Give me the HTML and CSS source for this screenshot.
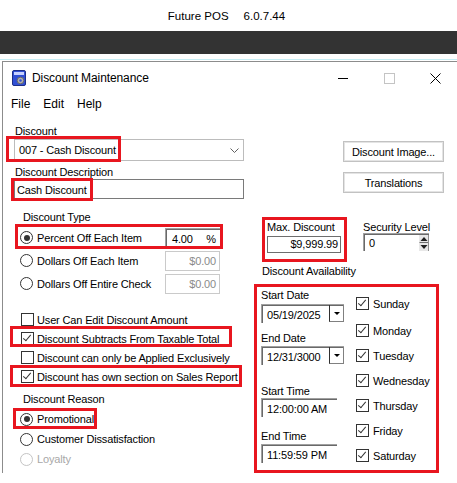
FILE: index.html
```html
<!DOCTYPE html>
<html lang="en">
  <head>
    <meta charset="UTF-8" />
    <meta name="viewport" content="width=device-width, initial-scale=1.0" />
    <title>Discount Maintenance</title>
    <link rel="stylesheet" href="styles.css">
  </head>
  <body>
    <div class="appHeader"><span>Future POS</span><span>6.0.7.44</span></div>
    <div class="appBar"></div>
    <div class="accent"></div>

    <div class="window">
      <div class="titleBar">
        <svg class="appIcon" viewBox="0 0 14 16">
          <rect x="0.5" y="0.5" width="13" height="15" rx="1.5" fill="#3150d4" stroke="#1d2e86" />
          <rect x="2" y="2" width="10" height="3" fill="#c8d2ff" />
          <circle cx="8.5" cy="10.5" r="3.3" fill="#b0b0b0" stroke="#6a6a6a" />
          <circle cx="8.5" cy="10.5" r="1.2" fill="#3150d4" />
        </svg>
        <span class="caption">Discount Maintenance</span>
        <div class="captionButtons">
          <span class="capBtn">
            <svg width="10" height="10" viewBox="0 0 10 10"><path d="M0 5.5h10" stroke="#000" /></svg>
          </span>
          <span class="capBtn">
            <svg width="11" height="11" viewBox="0 0 11 11"><rect x="0.5" y="0.5" width="10" height="10" fill="none" stroke="#c4c4c4" /></svg>
          </span>
          <span class="capBtn">
            <svg width="11" height="11" viewBox="0 0 11 11"><path d="M0.5 0.5l10 10M10.5 0.5l-10 10" stroke="#000" /></svg>
          </span>
        </div>
      </div>

      <div class="menuBar"><span>File</span><span>Edit</span><span>Help</span></div>

      <div class="form">
        <div class="leftCol">
          <div class="label discountLabel">Discount</div>
          <div class="combo">
            <span>007 - Cash Discount</span>
            <svg class="chevron" width="9" height="5" viewBox="0 0 9 5"><path d="M0.5 0.5l4 4 4-4" fill="none" stroke="#606060" /></svg>
            <div class="mark markCombo"></div>
          </div>
          <div class="label descLabel">Discount Description</div>
          <div class="textBox">Cash Discount<div class="mark markDesc"></div></div>

          <div class="label groupLabel">Discount Type</div>
          <div class="typeList">
            <div class="typeRow">
              <span class="radio on"></span><span class="optText">Percent Off Each Item</span>
              <span class="amount active"><span>4.00</span><span>%</span></span>
              <div class="mark markPercent"></div>
            </div>
            <div class="typeRow">
              <span class="radio"></span><span class="optText">Dollars Off Each Item</span>
              <span class="amount">$0.00</span>
            </div>
            <div class="typeRow">
              <span class="radio"></span><span class="optText">Dollars Off Entire Check</span>
              <span class="amount">$0.00</span>
            </div>
          </div>

          <div class="checkList">
            <div class="checkRow"><span class="check"></span><span class="optText">User Can Edit Discount Amount</span></div>
            <div class="checkRow"><span class="check on"></span><span class="optText">Discount Subtracts From Taxable Total</span><div class="mark markTaxable"></div></div>
            <div class="checkRow"><span class="check"></span><span class="optText">Discount can only be Applied Exclusively</span></div>
            <div class="checkRow"><span class="check on"></span><span class="optText">Discount has own section on Sales Report</span><div class="mark markReport"></div></div>
          </div>

          <div class="label groupLabel reasonLabel">Discount Reason</div>
          <div class="reasonList">
            <div class="reasonRow"><span class="radio on"></span><span class="optText">Promotional</span><div class="mark markPromo"></div></div>
            <div class="reasonRow"><span class="radio"></span><span class="optText">Customer Dissatisfaction</span></div>
            <div class="reasonRow disabled"><span class="radio"></span><span class="optText">Loyalty</span></div>
          </div>
        </div>

        <div class="rightCol">
          <div class="btn firstBtn">Discount Image...</div>
          <div class="btn">Translations</div>

          <div class="limits">
            <div class="maxDisc">
              <div class="label">Max. Discount</div>
              <div class="moneyBox">$9,999.99</div>
              <div class="mark markMax"></div>
            </div>
            <div class="security">
              <div class="label secLabel">Security Level</div>
              <div class="spin">
                <span>0</span>
                <svg class="spinArrows" width="10" height="16" viewBox="0 0 10 16">
                  <rect x="0" y="0" width="10" height="16" fill="#e8e8e8" />
                  <path d="M0.5 7.5h9" stroke="#707070" />
                  <path d="M5 2l3.5 4h-7z" fill="#202020" />
                  <path d="M5 14l3.5-4h-7z" fill="#202020" />
                  <path d="M9.5 0v16" stroke="#909090" />
                </svg>
              </div>
            </div>
          </div>

          <div class="label availLabel">Discount Availability</div>
          <div class="avail">
            <div class="dates">
              <div class="label startDate">Start Date</div>
              <div class="dateBox"><span>05/19/2025</span><span class="dropBtn"></span></div>
              <div class="label endDate">End Date</div>
              <div class="dateBox endBox"><span>12/31/3000</span><span class="dropBtn"></span></div>
              <div class="label startTime">Start Time</div>
              <div class="timeBox">12:00:00 AM</div>
              <div class="label endTime">End Time</div>
              <div class="timeBox endBox">11:59:59 PM</div>
            </div>
            <div class="days">
              <div class="dayRow"><span class="check on"></span><span class="optText">Sunday</span></div>
              <div class="dayRow"><span class="check on"></span><span class="optText">Monday</span></div>
              <div class="dayRow"><span class="check on"></span><span class="optText">Tuesday</span></div>
              <div class="dayRow"><span class="check on"></span><span class="optText">Wednesday</span></div>
              <div class="dayRow"><span class="check on"></span><span class="optText">Thursday</span></div>
              <div class="dayRow"><span class="check on"></span><span class="optText">Friday</span></div>
              <div class="dayRow"><span class="check on"></span><span class="optText">Saturday</span></div>
            </div>
          </div>
        </div>
      </div>
    </div>
  </body>
</html>
```

FILE: styles.css
```css
body {
  margin: 0;
  width: 457px;
  height: 483px;
  overflow: hidden;
  background-color: white;
  color: black;
  font-family: "Liberation Sans", Arial, sans-serif;
  font-size: 11px;
}

.appHeader {
  height: 31px;
  display: flex;
  justify-content: center;
  align-items: center;
  gap: 15px;
  padding-right: 4px;
  font-size: 11.5px;
}
.appBar {
  height: 23px;
  background-color: #333333;
}
.accent {
  height: 1px;
  margin-top: 5px;
  background-color: #c6edf4;
}

.window {
  margin: 1px 0 0 2px;
  width: 455px;
  border-left: 1px solid #8c8c8c;
  border-top: 1px solid #8c8c8c;
}
.titleBar {
  height: 32px;
  display: flex;
  align-items: center;
  font-size: 12px;
}
.appIcon {
  width: 14px;
  height: 16px;
  margin-left: 9px;
  flex: none;
}
.caption {
  margin-left: 6px;
  letter-spacing: -0.1px;
}
.captionButtons {
  margin-left: auto;
  display: flex;
  height: 100%;
}
.capBtn {
  width: 46px;
  display: flex;
  align-items: center;
  justify-content: center;
}

.menuBar {
  height: 20px;
  display: flex;
  align-items: center;
  gap: 13px;
  padding-left: 8px;
  font-size: 12px;
}

.form {
  display: flex;
  letter-spacing: -0.15px;
}
.leftCol,
.rightCol {
  display: flex;
  flex-direction: column;
  align-items: flex-start;
}
.leftCol {
  width: 250px;
  flex: none;
}
.rightCol {
  flex: 1;
}

.label {
  height: 13px;
  line-height: 13px;
  white-space: nowrap;
}
.mark {
  position: absolute;
  box-sizing: border-box;
  border: 3px solid #e8161f;
  pointer-events: none;
}

/* left column */
.discountLabel {
  margin: 11px 0 0 12px;
}
.combo {
  position: relative;
  box-sizing: border-box;
  margin: 1px 0 0 11px;
  width: 230px;
  height: 22px;
  border: 1px solid #bcbcbc;
  display: flex;
  align-items: center;
  padding-left: 4px;
}
.chevron {
  margin: 0 4px 0 auto;
}
.markCombo {
  left: -9px;
  top: -4px;
  width: 115px;
  height: 26px;
}
.descLabel {
  margin: 5px 0 0 12px;
}
.textBox {
  position: relative;
  box-sizing: border-box;
  margin-left: 11px;
  width: 230px;
  height: 20px;
  border: 1px solid #7a7a7a;
  padding: 3px 0 0 2px;
  line-height: 15px;
}
.markDesc {
  left: -4px;
  top: -2px;
  width: 82px;
  height: 23px;
}

.groupLabel {
  margin: 12px 0 0 20px;
}
.typeList {
  margin: 2px 0 0 17px;
}
.typeRow {
  position: relative;
  height: 23px;
  display: flex;
  align-items: center;
}
.typeRow .optText {
  width: 128px;
}
.optText {
  margin-left: 4px;
  white-space: nowrap;
}
.amount {
  box-sizing: border-box;
  width: 55px;
  height: 20px;
  border: 1px solid #cacaca;
  color: #8a8a8a;
  display: flex;
  align-items: center;
  justify-content: flex-end;
  padding-right: 3px;
}
.amount.active {
  border: none;
  border-top: 1px solid #a0a0a0;
  border-left: 1px solid #a0a0a0;
  box-shadow: inset 1px 1px #696969;
  color: black;
  justify-content: space-between;
  padding: 1px 4px 0 6px;
}
.markPercent {
  left: -5px;
  top: -2px;
  width: 208px;
  height: 25px;
}

.radio {
  flex: none;
  box-sizing: border-box;
  width: 13px;
  height: 13px;
  border: 1px solid #333333;
  border-radius: 50%;
  position: relative;
  background-color: white;
}
.radio.on::after {
  content: "";
  position: absolute;
  left: 2.5px;
  top: 2.5px;
  width: 6px;
  height: 6px;
  border-radius: 50%;
  background-color: #333333;
}

.check {
  flex: none;
  box-sizing: border-box;
  width: 13px;
  height: 13px;
  border: 1px solid #333333;
  position: relative;
  background-color: white;
}
.check.on::after {
  content: "";
  position: absolute;
  left: 3px;
  top: 0px;
  width: 3px;
  height: 7px;
  border: solid #333333;
  border-width: 0 1px 1px 0;
  transform: rotate(40deg);
}

.checkList {
  margin: 15px 0 0 18px;
}
.checkRow {
  position: relative;
  height: 19px;
  display: flex;
  align-items: center;
}
.checkRow .optText {
  margin-left: 3px;
}
.markTaxable {
  left: -11px;
  top: -3px;
  width: 222px;
  height: 21px;
}
.markReport {
  left: -11px;
  top: -2px;
  width: 232px;
  height: 22px;
}

.reasonLabel {
  margin-top: 7px;
}
.reasonList {
  margin: 3px 0 0 17px;
}
.reasonRow {
  position: relative;
  height: 20px;
  display: flex;
  align-items: center;
}
.reasonRow.disabled {
  color: #a8a8a8;
}
.reasonRow.disabled .radio {
  border-color: #c4c4c4;
}
.markPromo {
  left: -7px;
  top: -1px;
  width: 84px;
  height: 21px;
}

/* right column */
.btn {
  box-sizing: border-box;
  margin: 10px 0 0 90px;
  width: 101px;
  height: 21px;
  border: 1px solid #c2c2c2;
  box-shadow: inset 0 0 0 1px #e4e4e4;
  display: flex;
  align-items: center;
  justify-content: center;
}
.btn.firstBtn {
  margin-top: 27px;
}

.limits {
  margin-top: 28px;
  display: flex;
}
.maxDisc {
  position: relative;
  margin-left: 14px;
}
.moneyBox {
  box-sizing: border-box;
  margin-top: 2px;
  width: 74px;
  height: 17px;
  border: 1px solid #6e6e6e;
  text-align: right;
  padding-right: 2px;
  line-height: 15px;
}
.markMax {
  left: -5px;
  top: -4px;
  width: 85px;
  height: 45px;
}
.security {
  margin-left: 22px;
}
.secLabel {
  height: 12px;
}
.spin {
  box-sizing: border-box;
  width: 66px;
  height: 18px;
  border-top: 1px solid #a0a0a0;
  border-left: 1px solid #a0a0a0;
  box-shadow: inset 1px 1px #696969;
  display: flex;
  align-items: center;
  padding: 1px 0 0 5px;
}
.spinArrows {
  margin-left: auto;
}

.availLabel {
  margin: 12px 0 0 9px;
}
.avail {
  box-sizing: border-box;
  margin: 6px 0 0 1px;
  width: 185px;
  height: 189px;
  border: 3px solid #e8161f;
  padding-left: 4px;
  display: flex;
}
.dates {
  width: 83px;
  display: flex;
  flex-direction: column;
}
.startDate {
  margin-top: 2px;
}
.endDate {
  margin-top: 9px;
}
.startTime {
  margin-top: 20px;
}
.endTime {
  margin-top: 13px;
}
.dateBox,
.timeBox {
  box-sizing: border-box;
  height: 19px;
  border-top: 1px solid #a0a0a0;
  border-left: 1px solid #a0a0a0;
  box-shadow: inset 1px 1px #696969;
  display: flex;
  align-items: center;
  padding: 1px 0 0 5px;
}
.dateBox {
  margin-top: 2px;
  width: 83px;
}
.timeBox {
  width: 76px;
}
.endBox {
  margin-top: 1px;
}
.dropBtn {
  margin-left: auto;
  align-self: stretch;
  margin-top: -1px;
  margin-bottom: 1px;
  width: 15px;
  box-sizing: border-box;
  border-left: 1px solid #303030;
  border-right: 1px solid #808080;
  border-bottom: 1px solid #808080;
  position: relative;
}
.dropBtn::after {
  content: "";
  position: absolute;
  left: 4px;
  top: 7px;
  border-left: 3px solid transparent;
  border-right: 3px solid transparent;
  border-top: 3px solid black;
}

.days {
  margin-left: 12px;
  padding-top: 4px;
}
.dayRow {
  height: 25px;
  display: flex;
  align-items: center;
}
.dayRow:nth-child(2) {
  margin-top: 2px;
}
```
